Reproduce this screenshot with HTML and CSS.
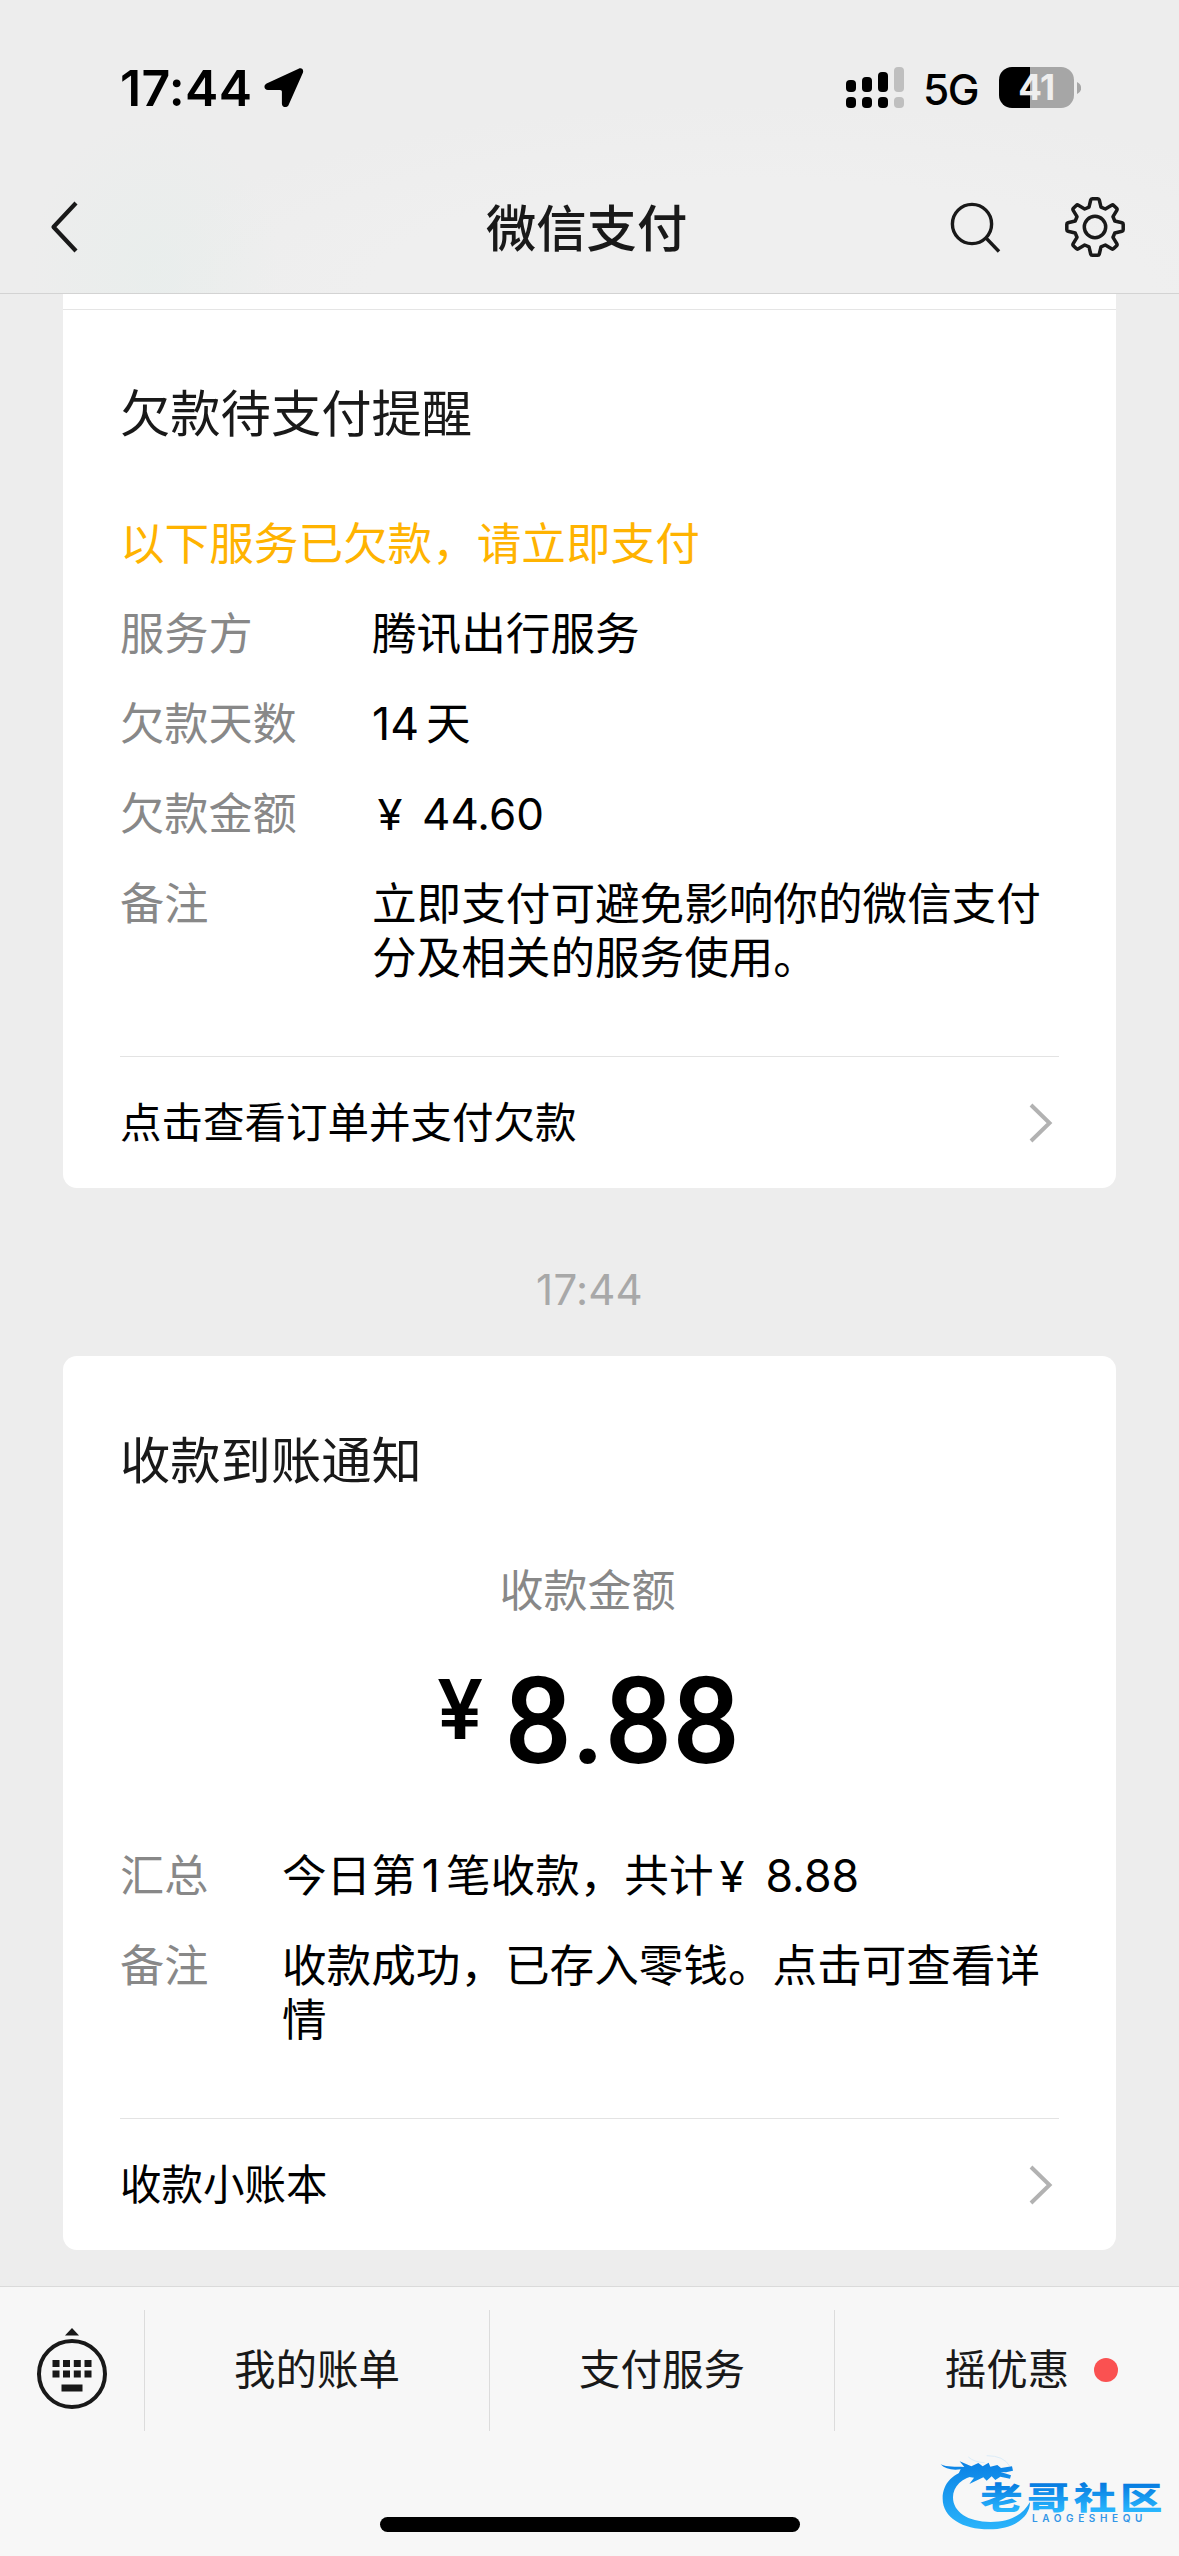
FILE: index.html
```html
<!DOCTYPE html>
<html lang="zh-CN">
<head>
<meta charset="utf-8">
<title>微信支付</title>
<link rel="stylesheet" href="styles.css">
</head>
<body>
<div class="screen">
  <header class="top">
    <div class="status">
      <span class="clock">17:44</span>
      <svg class="location" width="40" height="40" viewBox="0 0 40 40"><path d="M34.6 .8C37.6-.6 40 1.6 38.900 4.800L24.600 37C23.400 40 18 40 17.900 35.700V24C17.900 22.800 17.300 22.100 16 22.100H4C0 22.100-.8 17.200 2.600 15.500Z"/></svg>
      <svg class="signal" width="58" height="41" viewBox="0 0 58 41">
        <g><rect y="13" width="10" height="12" rx="4"/><rect x="16" y="10" width="10" height="15" rx="4"/><rect x="32" y="5" width="10" height="20" rx="4"/><rect y="30" width="10" height="11" rx="4"/><rect x="16" y="30" width="10" height="11" rx="4"/><rect x="32" y="30" width="10" height="11" rx="4"/></g>
        <g fill="#bfbfbf"><rect x="48" width="10" height="25" rx="4"/><rect x="48" y="30" width="10" height="11" rx="4"/></g>
      </svg>
      <span class="network">5G</span>
      <span class="battery">41</span>
      <svg class="nub" width="4" height="12" viewBox="0 0 4 12"><path d="M0 0C5.500 2.500 5.500 9.500 0 12Z" fill="#a6a6a6"/></svg>
    </div>
    <nav class="nav">
      <svg width="28" height="52" viewBox="0 0 28 52"><path d="M26 2L3.500 26L26 50" fill="none" stroke="#191919" stroke-width="4.200" stroke-linejoin="round"/></svg>
      <h1>微信支付</h1>
      <svg class="search" width="52" height="60" viewBox="0 0 52 60"><g fill="none" stroke="#191919" stroke-width="3.400"><circle cx="23" cy="27" r="19.600"/><path d="M36.800 40.800L50 54.500"/></g></svg>
      <svg class="gear" width="62" height="62" viewBox="-31 -31 62 62"><g fill="none" stroke="#191919" stroke-width="3.500" stroke-linejoin="round"><circle r="10.700"/><path d="M-2.800-28.200H2.800Q4-28.200 4.300-27L6-19.800L10.300-18L16.600-21.800Q17.800-22.500 18.700-21.600L21.600-18.700Q22.500-17.800 21.800-16.600L18-10.300L19.800-6L27-4.300Q28.200-4 28.200-2.800V2.800Q28.200 4 27 4.300L19.800 6L18 10.300L21.800 16.600Q22.500 17.800 21.600 18.700L18.700 21.600Q17.800 22.500 16.600 21.800L10.300 18L6 19.800L4.300 27Q4 28.200 2.800 28.200H-2.800Q-4 28.200-4.300 27L-6 19.800L-10.300 18L-16.600 21.800Q-17.800 22.500-18.700 21.600L-21.600 18.700Q-22.500 17.800-21.800 16.600L-18 10.300L-19.800 6L-27 4.300Q-28.200 4-28.200 2.800V-2.800Q-28.200-4-27-4.300L-19.800-6L-18-10.300L-21.800-16.600Q-22.500-17.800-21.600-18.700L-18.700-21.600Q-17.800-22.500-16.600-21.800L-10.300-18L-6-19.800L-4.300-27Q-4-28.200-2.800-28.200Z"/></g></svg>
    </nav>
  </header>

  <main class="feed">
    <section class="card card-due">
      <div class="prev-edge"></div>
      <h2>欠款待支付提醒</h2>
      <p class="warning">以下服务已欠款，请立即支付</p>
      <dl class="rows wide">
        <dt>服务方</dt><dd>腾讯出行服务</dd>
        <dt>欠款天数</dt><dd><span class="days">14</span>天</dd>
        <dt>欠款金额</dt><dd class="money"><span class="yen">¥</span>44.60</dd>
        <dt>备注</dt><dd>立即支付可避免影响你的微信支付<br>分及相关的服务使用。</dd>
      </dl>
      <div class="more"><span>点击查看订单并支付欠款</span>
        <svg width="24" height="40" viewBox="0 0 24 40"><path d="M2 2L20.500 20L2 38" fill="none" stroke="#b2b2b2" stroke-width="4"/></svg></div>
    </section>

    <time class="stamp">17:44</time>

    <section class="card card-income">
      <h2>收款到账通知</h2>
      <p class="caption">收款金额</p>
      <p class="amount"><span class="currency">¥</span><span class="figure">8.88</span></p>
      <dl class="rows narrow">
        <dt>汇总</dt><dd>今日第<span class="count">1</span>笔收款，共计<span class="yen tight">¥</span>8.88</dd>
        <dt>备注</dt><dd>收款成功，已存入零钱。点击可查看详<br>情</dd>
      </dl>
      <div class="more"><span>收款小账本</span>
        <svg width="24" height="40" viewBox="0 0 24 40"><path d="M2 2L20.500 20L2 38" fill="none" stroke="#b2b2b2" stroke-width="4"/></svg></div>
    </section>
  </main>

  <footer class="bottom">
    <div class="menu">
      <div class="keyboard"><svg width="72" height="84" viewBox="0 0 72 84"><g fill="#191919"><path d="M36 0L43 7.500H29Z"/><path d="M16.500 32h7v7h-7zM27 32h7v7h-7zM37.800 32h7v7h-7zM48.500 32h7v7h-7zM16.500 42.500h7v7h-7zM27 42.500h7v7h-7zM37.800 42.500h7v7h-7zM48.500 42.500h7v7h-7zM25.500 56.500h21v7h-21z"/></g><circle cx="36" cy="46" r="33" fill="none" stroke="#191919" stroke-width="4"/></svg></div>
      <div class="tab">我的账单</div>
      <div class="tab">支付服务</div>
      <div class="tab">摇优惠<i class="dot"></i></div>
    </div>
    <div class="home"></div>
  </footer>

  <svg class="watermark" width="249" height="116" viewBox="0 0 747 348">
    <defs>
      <linearGradient id="ring" gradientUnits="userSpaceOnUse" x1="0" y1="60" x2="0" y2="268"><stop offset="0" stop-color="#0a80e4"/><stop offset="1" stop-color="#2ab4fb"/></linearGradient>
      <linearGradient id="word" gradientUnits="userSpaceOnUse" x1="0" y1="-80" x2="0" y2="10"><stop offset="0" stop-color="#0579df"/><stop offset="1" stop-color="#2ab8ff"/></linearGradient>
    </defs>
    <path fill="url(#ring)" d="M125 88C70 97 38 130 38 176C38 232 98 268 177 268C247 268 300 235 300 186C278 225 240 246 182 246C112 246 69 215 69 172C69 139 95 113 142 104Z"/>
    <path fill="url(#ring)" d="M32 73C52 82 75 80 103 81L89 64L124 79L145 69L158 79L176 68L181 80L202 75L213 84L246 79L249 92L228 97L212 96L243 106L240 116L211 110L196 120L185 109L170 122L160 112L118 132L132 113L103 109L84 104L92 88C65 91 45 87 32 73Z"/>
    <path d="M115 51Q133 67 164 68M170 47Q221 47 239 78" fill="none" stroke="#dcecf7" stroke-width="3"/>
    <g class="brand" fill="url(#word)">
      <text transform="translate(151 206) scale(1.34 .98)">老</text>
      <text transform="translate(291 206) scale(1.34 .98)">哥</text>
      <text transform="translate(431 206) scale(1.34 .98)">社</text>
      <text transform="translate(570 206) scale(1.34 .98)">区</text>
    </g>
    <text class="latin" x="306" y="247" textLength="331" fill="#3296e6">LAOGESHEQU</text>
  </svg>
</div>
</body>
</html>
```
FILE: styles.css
```css
* { box-sizing: border-box; }
body, h1, h2, p, dl, dd { margin: 0; }
h1, h2 { font-weight: 400; }
svg { display: block; flex: none; }

.screen {
  position: relative;
  display: flex;
  flex-direction: column;
  width: 1179px;
  height: 2556px;
  overflow: hidden;
  background: #ededed;
  color: #000;
  font-family: Inter, "Noto Sans CJK SC", sans-serif;
  font-size: 44.600px;
}

/* Status bar and navigation */
.top {
  flex: none;
  height: 294px;
  border-bottom: 1px solid #d3d3d3;
  background:
    radial-gradient(ellipse 125px 155px at 155px 270px, rgba(230, 238, 235, .6), rgba(237, 237, 237, 0)),
    radial-gradient(ellipse 650px 190px at 760px 294px, #efefef 60%, rgba(237, 237, 237, 0)),
    #ededed;
}
.status {
  display: flex;
  align-items: center;
  height: 175px;
  padding-left: 120px;
}
.clock {
  width: 144px;
  font-size: 50px;
  font-weight: 600;
  letter-spacing: .3px;
}
.signal { margin-left: 542px; }
.network { width: 74px; margin-left: 19px; padding-top: 4px; font-size: 42.500px; font-weight: 500; letter-spacing: -1.500px; }
.battery {
  width: 75px;
  height: 41px;
  margin-left: 2px;
  border-radius: 13px;
  background: linear-gradient(90deg, #000 31px, #a6a6a6 31px);
  color: #eee;
  font-size: 35px;
  font-weight: 700;
  line-height: 41px;
  letter-spacing: -.5px;
  text-align: center;
}
.nub { margin-left: 3px; }
.nav {
  display: flex;
  align-items: center;
  height: 104px;
  padding-left: 50px;
}
.nav h1 {
  margin-left: 408px;
  padding-top: 3px;
  color: #191919;
  font-size: 50.300px;
  font-weight: 500;
  line-height: 60px;
}
.search { margin-left: 262px; }
.gear { margin-left: 63px; }

/* Message cards */
.feed { display: flex; flex: none; flex-direction: column; padding: 0 63px; }
.card { border-radius: 14px; background: #fff; }
.card-due { border-radius: 0 0 14px 14px; }
.prev-edge { height: 16px; border-bottom: 1px solid #e5e5e5; }
h2 {
  padding-left: 57px;
  color: #191919;
  font-size: 50.300px;
  line-height: 60px;
}
.card-due h2 { margin-top: 74px; }
.card-income h2 { padding-top: 75px; }
.warning { margin: 73px 0 36px 57px; color: #ffb300; line-height: 54px; }
.rows {
  display: grid;
  grid-auto-rows: minmax(54px, auto);
  row-gap: 36px;
  padding-left: 57px;
  line-height: 54px;
}
.wide { grid-template-columns: 252px 1fr; }
.narrow { grid-template-columns: 162px 1fr; }
.rows dt { color: #888; font-size: 44.200px; }
.rows dd { white-space: nowrap; }
.yen { display: inline-block; width: 50px; padding-left: 7px; font-size: 42px; line-height: 40px; transform: scaleX(1.080); }
.tight { width: 52px; }
.money { font-size: 44px; }
.days { margin-right: 7px; }
.count { margin: 0 6px; }
.more {
  display: flex;
  align-items: center;
  justify-content: space-between;
  height: 132px;
  margin: 71px 57px 0;
  padding-right: 6px;
  border-top: 1px solid #e3e3e3;
  font-size: 41.500px;
  line-height: 54px;
}
.stamp {
  height: 168px;
  padding-top: 72px;
  color: #a8a8a8;
  font-size: 42px;
  letter-spacing: .2px;
  line-height: 60px;
  text-align: center;
}
.caption { margin-top: 73px; padding-right: 4px; color: #888; font-size: 44px; line-height: 54px; text-align: center; }
.amount {
  display: flex;
  height: 120px;
  margin: 43px 0 68px 374px;
}
.currency { width: 67px; font-size: 82px; font-weight: 600; line-height: 97px; }
.figure { font-family: Roboto, sans-serif; font-size: 120px; font-weight: 500; line-height: 122px; letter-spacing: -.6px; }

/* Bottom menu */
.bottom {
  flex: none;
  height: 270px;
  margin-top: 36px;
  border-top: 1px solid #dadada;
  background: #f7f7f7;
}
.menu {
  display: grid;
  grid-template-columns: 144px 345px 345px 345px;
  height: 120px;
  margin-top: 23px;
}
.keyboard { display: flex; justify-content: center; padding-top: 18px; }
.tab {
  position: relative;
  border-left: 1px solid #dcdcdc;
  color: #191919;
  font-size: 41.500px;
  line-height: 121px;
  text-align: center;
}
.dot {
  position: absolute;
  top: 48px;
  left: 259px;
  width: 24px;
  height: 24px;
  border-radius: 50%;
  background: #fa5151;
}
.home { width: 420px; height: 15px; margin: 87px auto 0; border-radius: 8px; background: #000; }

.watermark { position: absolute; right: 0; bottom: 0; }
.brand { font: 900 95px "Noto Sans CJK SC", sans-serif; }
.latin { font: 600 30px Inter, sans-serif; }
```
